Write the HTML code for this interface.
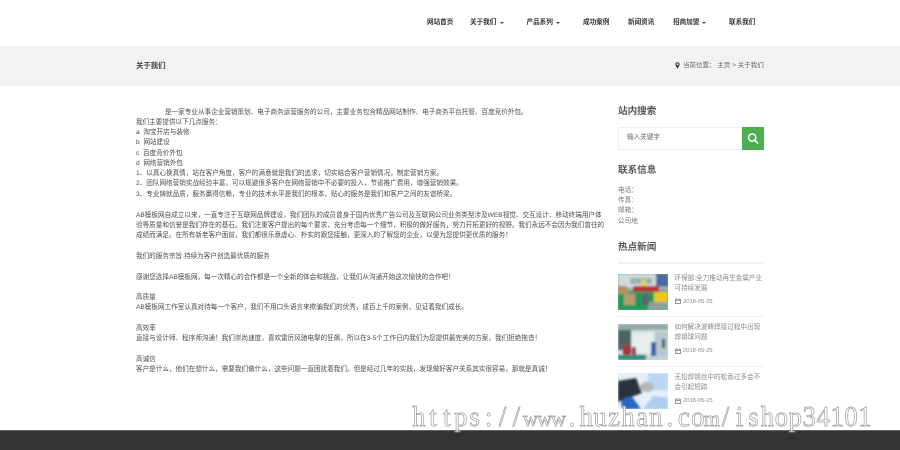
<!DOCTYPE html>
<html lang="zh"><head><meta charset="utf-8"><title>关于我们</title>
<style>
html,body{margin:0;padding:0;background:#fff}
#p{position:relative;width:900px;height:450px;overflow:hidden;background:#fff;font-family:"Liberation Sans","Noto Sans CJK SC",sans-serif}
.t{position:absolute;white-space:nowrap;line-height:10px;height:10px;font-size:6.6px;color:#4a4a4a;filter:blur(.3px)}
.n{font-weight:700;color:#333;top:18px}
.c{position:absolute;width:0;height:0;border-left:2px solid transparent;border-right:2px solid transparent;border-top:2.5px solid #444;top:22px}
.h{font-size:9.6px;font-weight:700;color:#555;line-height:12px;height:12px;filter:blur(.3px)}
.l{position:absolute;left:618px;width:146px;height:1px;background:#f0f0f0}
.im{position:absolute;left:618px;width:50px;height:36px}
.g{color:#777}
.d{color:#888;font-size:5.8px}
.w{color:#888;font-size:6.6px}
</style></head><body><div id="p">
<div class="t n" style="left:427px">网站首页</div>
<div class="t n" style="left:470px">关于我们</div><div class="c" style="left:500px"></div>
<div class="t n" style="left:526.5px">产品系列</div><div class="c" style="left:556px"></div>
<div class="t n" style="left:583px">成功案例</div>
<div class="t n" style="left:628px">新闻资讯</div>
<div class="t n" style="left:673px">招商加盟</div><div class="c" style="left:702px"></div>
<div class="t n" style="left:729px">联系我们</div>

<div style="position:absolute;left:0;top:46px;width:900px;height:40px;background:#f2f2f2"></div>
<div class="t" style="left:136px;top:61px;font-size:7.4px;font-weight:700;color:#444">关于我们</div>
<svg style="position:absolute;left:675px;top:62px" width="5" height="7" viewBox="0 0 5 7"><path d="M2.5 0.3C1.2 0.3.4 1.2.4 2.3c0 1.4 2.1 4.4 2.1 4.4s2.1-3 2.1-4.4C4.6 1.2 3.8.3 2.5.3zm0 3A1 1 0 1 1 2.5 1.3a1 1 0 0 1 0 2z" fill="#333"/></svg>
<div class="t" style="left:683px;top:61px;font-size:6.5px;color:#666">当前位置：&nbsp;主页 &gt; 关于我们</div>

<div class="t" style="left:165px;top:108px">是一家专业从事企业营销策划、电子商务运营服务的公司，主要业务包含精品网站制作、电子商务平台托管、百度竞价外包。</div>
<div class="t" style="left:136px;top:118px">我们主要提供以下几点服务：</div>
<div class="t" style="left:136px;top:128px">a&nbsp; 淘宝开店与装修</div>
<div class="t" style="left:136px;top:138px">b&nbsp; 网站建设</div>
<div class="t" style="left:136px;top:149px">c&nbsp; 百度竞价外包</div>
<div class="t" style="left:136px;top:159px">d&nbsp; 网络营销外包</div>
<div class="t" style="left:136px;top:169px">1、以真心换真情，站在客户角度，客户的满意就是我们的追求，切实结合客户营销情况，制定营销方案。</div>
<div class="t" style="left:136px;top:179px">2、团队网络营销实战经验丰富，可以规避很多客户在网络营销中不必要的投入，节省推广费用，增强营销效果。</div>
<div class="t" style="left:136px;top:190px">3、专业铸就品质，服务赢得信赖，专业的技术水平是我们的根本，贴心的服务是我们和客户之间的友谊桥梁。</div>
<div class="t" style="left:136px;top:211px">AB模板网自成立以来，一直专注于互联网品牌建设，我们团队的成员曾身于国内优秀广告公司及互联网公司业务类型涉及WEB视觉、交互设计、移动终端用户体</div>
<div class="t" style="left:136px;top:221px">验等质量和信誉是我们存在的基石。我们注重客户提出的每个要求，充分考虑每一个细节，积极的做好服务，努力开拓更好的视野。我们永远不会因为我们曾往的</div>
<div class="t" style="left:136px;top:231px">成绩而满足。在所有新老客户面前，我们都很乐意虚心、朴实的跟您接触，更深入的了解您的企业，以便为您提供更优质的服务！</div>
<div class="t" style="left:136px;top:252px">我们的服务宗旨:持续为客户创造最优质的服务</div>
<div class="t" style="left:136px;top:273px">感谢您选择AB模板网，每一次精心的合作都是一个全新的体会和挑战，让我们从沟通开始这次愉快的合作吧！</div>
<div class="t" style="left:136px;top:293px">高质量</div>
<div class="t" style="left:136px;top:303px">AB模板网工作室认真对待每一个客户，我们不用口头语言来欺骗我们的优秀，成百上千的案例，见证着我们成长。</div>
<div class="t" style="left:136px;top:324px">高效率</div>
<div class="t" style="left:136px;top:334px">直接与设计师、程序师沟通！我们崇尚速度，喜欢雷厉风驰电掣的狂飙，所以在3-5个工作日内我们为您提供最完美的方案，我们拒绝拖沓！</div>
<div class="t" style="left:136px;top:355px">高诚信</div>
<div class="t" style="left:136px;top:365px">客户是什么，他们在想什么，需要我们做什么，这些问题一直困扰着我们。但是经过几年的实践，发现做好客户关系其实很容易，那就是真诚！</div>

<div class="t h" style="left:618px;top:106px">站内搜索</div>
<div style="position:absolute;left:618px;top:127px;width:124px;height:21px;border:1px solid #eee;border-right:0"></div>
<div class="t" style="left:627px;top:133px;color:#666">输入关键字</div>
<div style="position:absolute;left:742px;top:127px;width:22px;height:23px;background:#4caf50"></div>
<svg style="position:absolute;left:747px;top:132px" width="12" height="13" viewBox="0 0 12 13"><circle cx="5.2" cy="5.5" r="3.6" fill="none" stroke="#fff" stroke-width="1.5"/><path d="M8 8.3l2.6 2.7" stroke="#fff" stroke-width="1.7" stroke-linecap="round"/></svg>

<div class="t h" style="left:618px;top:165px">联系信息</div>
<div class="t g" style="left:618px;top:186px">电话：</div>
<div class="t g" style="left:618px;top:196px">传真：</div>
<div class="t g" style="left:618px;top:206px">邮箱：</div>
<div class="t g" style="left:618px;top:217px">公司地</div>

<div class="t h" style="left:618px;top:242px">热点新闻</div>
<div class="l" style="top:262px;height:1.5px"></div>

<svg class="im" style="top:273.5px" width="50" height="36" viewBox="0 0 50 36"><defs><filter id="b" x="-10%" y="-10%" width="120%" height="120%"><feGaussianBlur stdDeviation="1"/></filter></defs><rect width="50" height="36" fill="#8aa79c"/><g filter="url(#b)"><rect width="50" height="14" fill="#d3dadb"/><rect x="38" y="0" width="12" height="13" fill="#4a6aa6"/><rect x="12" y="4" width="22" height="6" fill="#9eb0ae"/><rect x="0" y="18" width="36" height="18" fill="#1f9a5c"/><rect x="0" y="12" width="9" height="8" fill="#b98f5c"/><rect x="6" y="20" width="11" height="11" fill="#b89b6e"/><rect x="15" y="12" width="26" height="6" fill="#b5363c"/><rect x="23" y="6" width="5" height="6" fill="#e2d84e"/><rect x="36" y="18" width="14" height="10" fill="#f0c61c"/><rect x="30" y="28" width="20" height="8" fill="#8aa49a"/><rect x="24" y="20" width="7" height="11" fill="#56686e"/></g></svg>
<div class="t w" style="left:674.5px;top:273.5px">环保部:全力推动再生金属产业</div>
<div class="t w" style="left:674.5px;top:283.5px">可持续发展</div>
<svg style="position:absolute;left:674.5px;top:298px" width="6" height="6" viewBox="0 0 6 6"><path d="M.5 1.2h5v4.4h-5zM.5 2.6h5M1.7.3v1.2M4.3.3v1.2" fill="none" stroke="#777" stroke-width=".7"/></svg>
<div class="t d" style="left:683px;top:296.5px">2018-05-25</div>
<div class="l" style="top:316px"></div>

<svg class="im" style="top:323.5px" width="50" height="36" viewBox="0 0 50 36"><rect width="50" height="36" fill="#d2dfdf"/><g filter="url(#b)"><rect width="50" height="6" fill="#93a8a8"/><rect x="0" y="6" width="13" height="20" fill="#4f6465"/><rect x="14" y="9" width="22" height="20" fill="#e6eeee"/><rect x="37" y="8" width="13" height="24" fill="#b4c7cc"/><rect x="5" y="21" width="8" height="12" fill="#a8333a"/><rect x="14" y="23" width="4" height="9" fill="#8c4048"/><rect x="33" y="18" width="5" height="14" fill="#3561a8"/><rect x="44" y="15" width="3" height="9" fill="#34506f"/><rect y="31" width="28" height="5" fill="#2f8d7a"/><rect x="28" y="32" width="22" height="4" fill="#c2d0d1"/></g></svg>
<div class="t w" style="left:674.5px;top:323px">如何解决波峰焊接过程中出现</div>
<div class="t w" style="left:674.5px;top:333px">焊锡球问题</div>
<svg style="position:absolute;left:674.5px;top:348px" width="6" height="6" viewBox="0 0 6 6"><path d="M.5 1.2h5v4.4h-5zM.5 2.6h5M1.7.3v1.2M4.3.3v1.2" fill="none" stroke="#777" stroke-width=".7"/></svg>
<div class="t d" style="left:683px;top:346px">2018-05-25</div>
<div class="l" style="top:366px"></div>

<svg class="im" style="top:373px" width="50" height="36" viewBox="0 0 50 36"><rect width="50" height="36" fill="#e6eff9"/><g filter="url(#b)"><path d="M30 0h20v17H30z" fill="#bcd6f2"/><path d="M0 8L18 5l6 15-24 9z" fill="#2c323c"/><ellipse cx="29" cy="14" rx="7" ry="5" fill="#b4b8b8"/><path d="M3 30c2-7 9-7 12-5l8 11H5z" fill="#2566c4"/><path d="M25 36l10-13 15 2v11z" fill="#afcdf0"/></g></svg>
<div class="t w" style="left:674.5px;top:373px">无铅焊锡丝中的松香过多会不</div>
<div class="t w" style="left:674.5px;top:383px">会引起短路</div>
<svg style="position:absolute;left:675px;top:398px" width="6" height="6" viewBox="0 0 6 6"><path d="M.5 1.2h5v4.4h-5zM.5 2.6h5M1.7.3v1.2M4.3.3v1.2" fill="none" stroke="#777" stroke-width=".7"/></svg>
<div class="t d" style="left:683px;top:396px">2018-05-25</div>

<div style="position:absolute;left:0;top:430px;width:900px;height:20px;background:#333;border-top:1px solid #666;box-sizing:border-box"></div>
<svg style="position:absolute;left:0;top:395px" width="900" height="40" viewBox="0 0 900 40"><g transform="translate(412 31) scale(.95 1)"><text y="0" font-family="'Liberation Serif',serif" font-size="28" text-anchor="middle" fill="#fff" fill-opacity=".8" stroke="#999" stroke-width=".7" x="7.3 22 36.7 51.3 66 80.7 95.4 110 124.7 139.4 154.1 168.7 183.4 198.1 212.7 227.4 242.1 256.8 271.4 286.1 300.8 315.5 330.1 344.8 359.5 374.1 388.8 403.5 418.2 432.8 447.5 462.2 476.8">https://<tspan font-size="22">www</tspan>.huzhan.co<tspan font-size="22">m</tspan>/ishop34101</text></g></svg>
</div></body></html>
